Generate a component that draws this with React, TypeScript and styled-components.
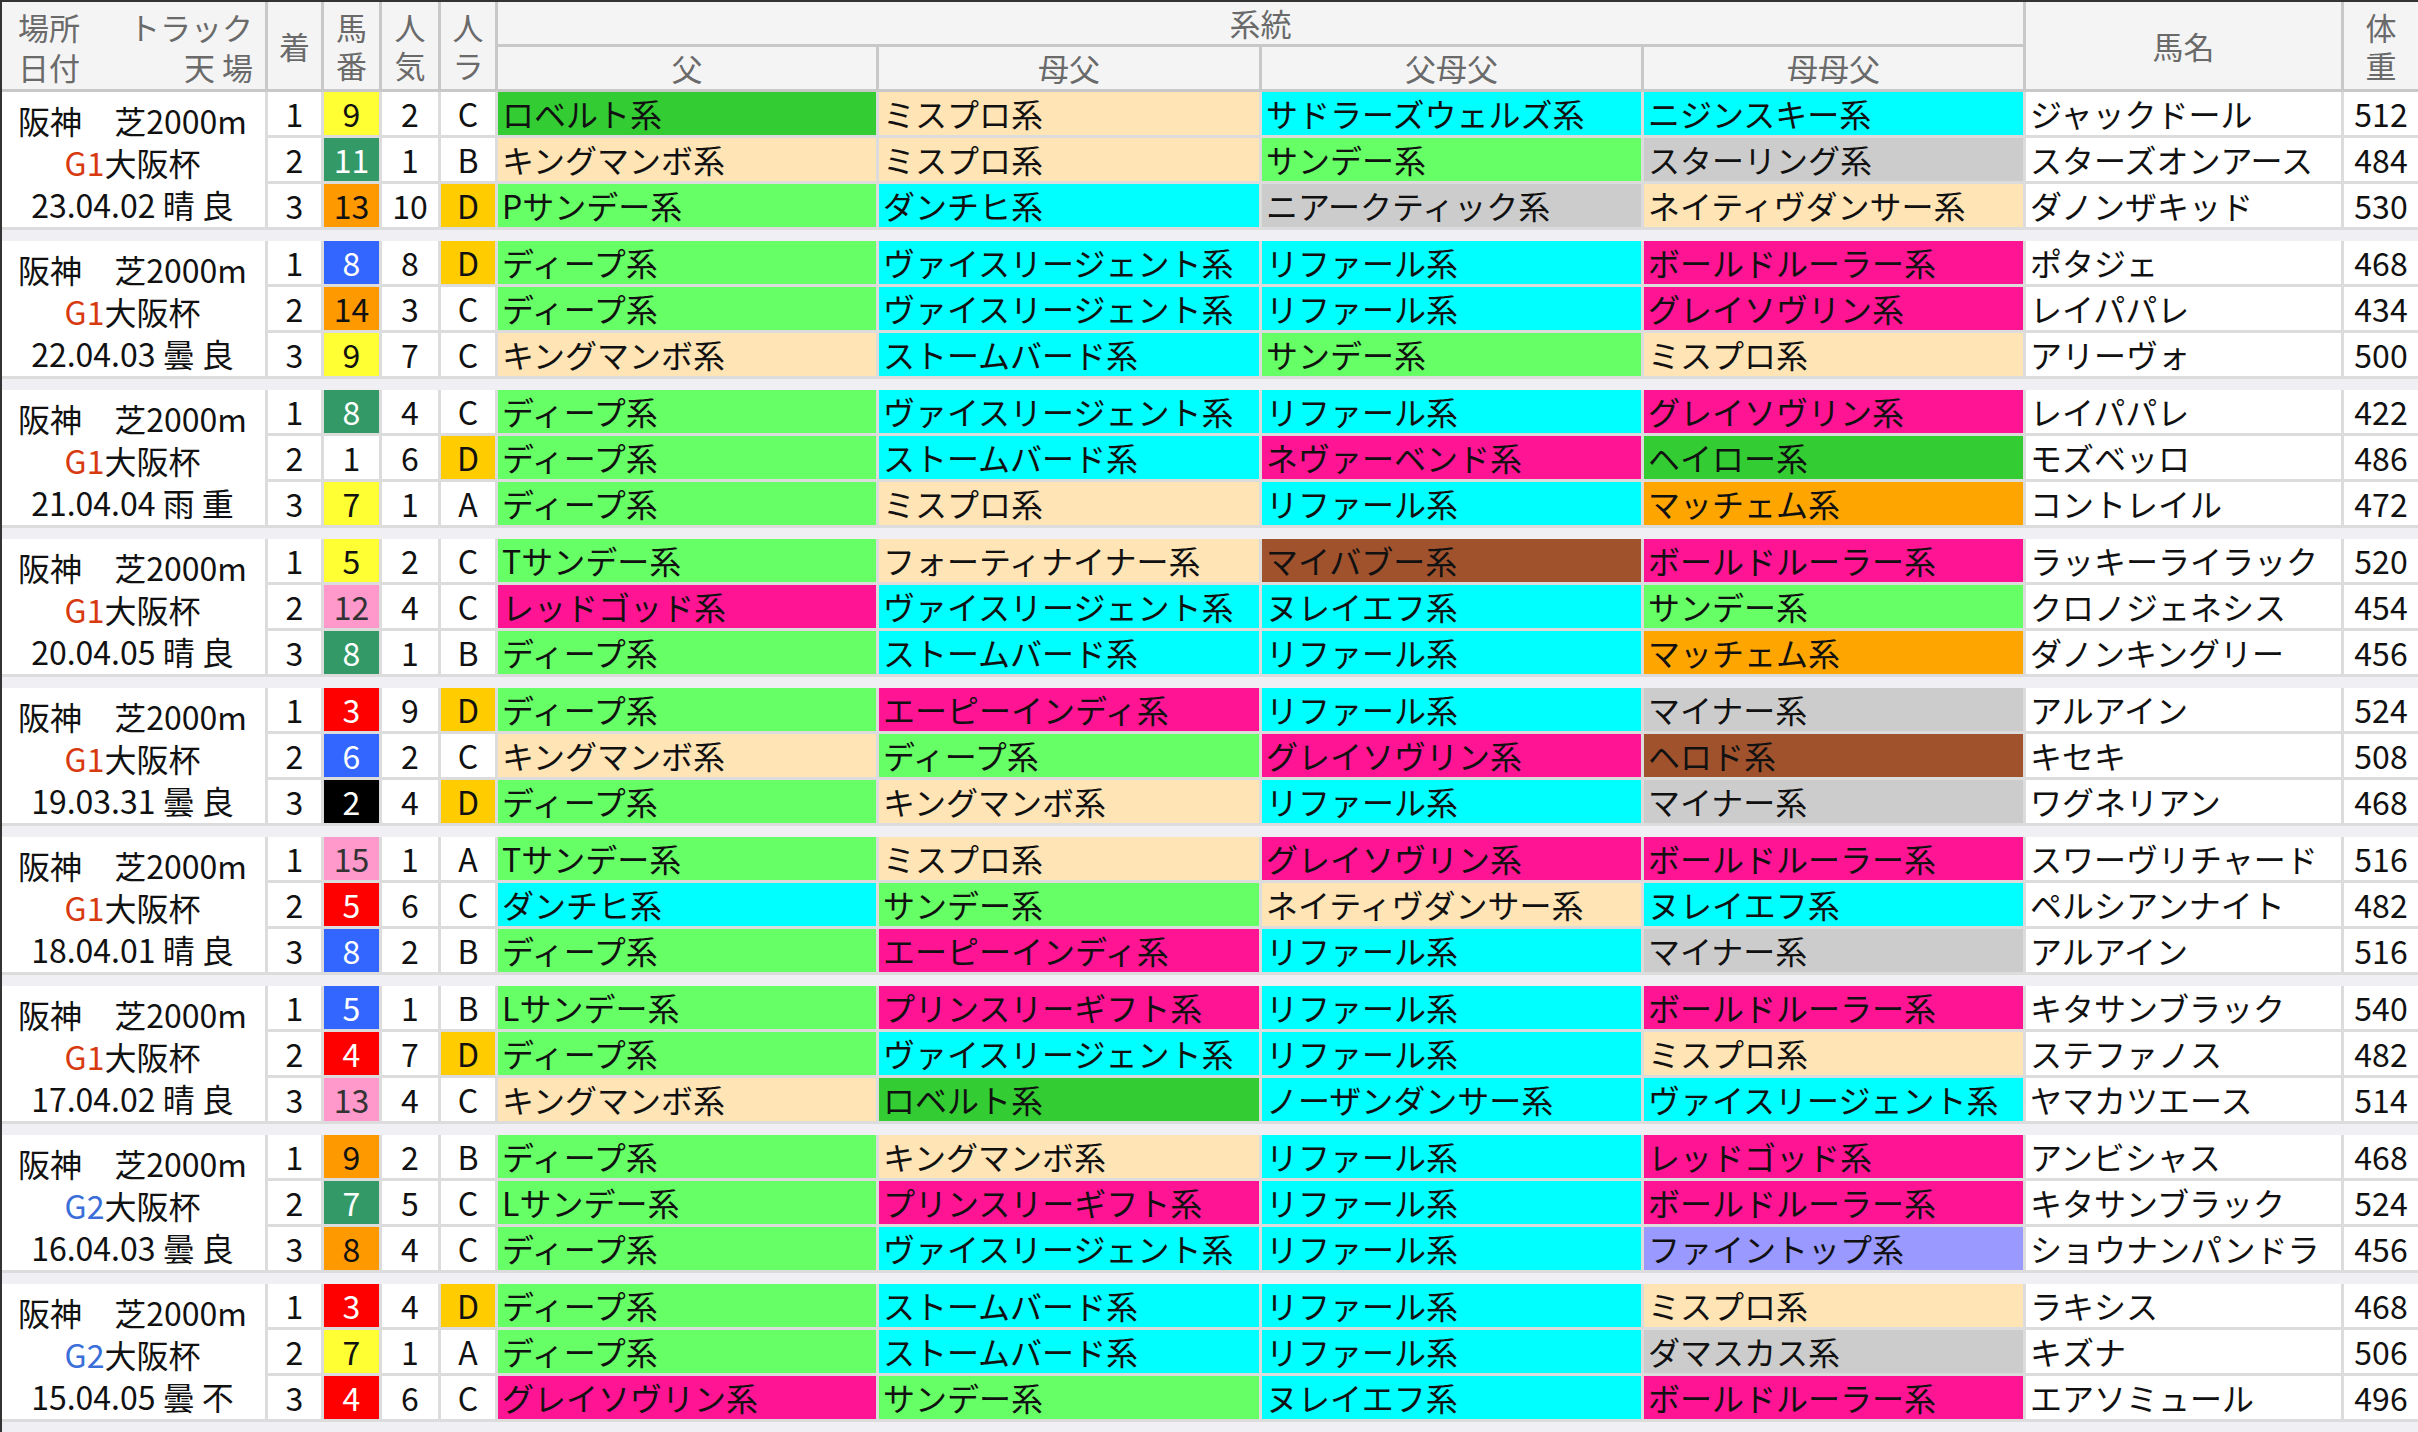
import React from "react";
import styled, { createGlobalStyle } from "styled-components";

const Global = createGlobalStyle`
  html, body { margin: 0; padding: 0; background: #fff; }
  body { font-family: "Noto Sans CJK JP", "Noto Sans", sans-serif; }
`;

const COLS = "263px 53px 55px 56px 54px 378px 380px 379px 379px 315px 74px";

const Page = styled.div`
  width: 2418px;
  height: 1432px;
  overflow: hidden;
  box-sizing: border-box;
  border-left: 2px solid #333;
  border-top: 2px solid #333;
  background: #f0f0f4;
`;

const Header = styled.div`
  display: grid;
  grid-template-columns: ${COLS};
  grid-template-rows: 42px 42px;
  gap: 3px;
  background: #c8c8c8;
  padding-bottom: 3px;
`;

const HCell = styled.div<{ $c: string; $r: string }>`
  grid-column: ${(p) => p.$c};
  grid-row: ${(p) => p.$r};
  background: #f4f4f4;
  color: #6a6a6a;
  font-size: 31px;
  line-height: 38px;
  display: flex;
  align-items: center;
  justify-content: center;
  text-align: center;
  overflow: hidden;
`;

const HLeft = styled.div`
  grid-column: 1;
  grid-row: 1 / 3;
  background: #f4f4f4;
  color: #6a6a6a;
  font-size: 31px;
  line-height: 40px;
  padding: 2px 12px 0 16px;
  display: flex;
  flex-direction: column;
  justify-content: center;
`;

const HLine = styled.div`
  display: flex;
  justify-content: space-between;
`;

const Block = styled.div`
  display: grid;
  grid-template-columns: ${COLS};
  grid-template-rows: 43px 43px 43px;
  gap: 3px;
  background: #dcdcdc;
  padding-bottom: 3px;
  margin-bottom: 11px;
`;

const Info = styled.div`
  grid-column: 1;
  grid-row: 1 / 4;
  background: #fff;
  font-size: 32px;
  line-height: 42px;
  color: #111;
  display: flex;
  flex-direction: column;
  justify-content: center;
  padding-left: 16px;
  padding-right: 18px;
  padding-top: 4px;
`;

const InfoLine = styled.div<{ $align?: string }>`
  display: flex;
  justify-content: ${(p) => p.$align || "space-between"};
  white-space: nowrap;
`;

const Grade = styled.span<{ $g: string }>`
  color: ${(p) => (p.$g === "G1" ? "#d83a10" : "#3a6ed8")};
`;

const Cell = styled.div<{ $bg?: string; $fg?: string; $left?: boolean }>`
  background: ${(p) => p.$bg || "#fff"};
  color: ${(p) => p.$fg || "#111"};
  font-size: 32px;
  line-height: 43px;
  white-space: nowrap;
  overflow: hidden;
  display: flex;
  align-items: center;
  justify-content: ${(p) => (p.$left ? "flex-start" : "center")};
  padding-left: ${(p) => (p.$left ? "4px" : "0")};
`;

const C: Record<string, string> = {
  dg: "#33cc33",
  pe: "#ffe4b5",
  gr: "#66ff66",
  cy: "#00ffff",
  ga: "#cccccc",
  mg: "#ff1493",
  or: "#ffa500",
  br: "#a0522d",
  lv: "#9999ff",
};

const F: Record<string, [string, string]> = {
  w: ["#ffffff", "#111"],
  k: ["#000000", "#fff"],
  r: ["#ff0000", "#fff"],
  b: ["#3366ff", "#fff"],
  y: ["#ffff33", "#111"],
  g: ["#339966", "#fff"],
  o: ["#ff9900", "#111"],
  p: ["#ff99cc", "#333"],
};

const S: Record<string, string> = {
  ディープ系: "gr", サンデー系: "gr", Pサンデー系: "gr", Tサンデー系: "gr", Lサンデー系: "gr",
  ロベルト系: "dg", ヘイロー系: "dg",
  キングマンボ系: "pe", ミスプロ系: "pe", ネイティヴダンサー系: "pe", フォーティナイナー系: "pe",
  ダンチヒ系: "cy", ヴァイスリージェント系: "cy", リファール系: "cy", ストームバード系: "cy", ヌレイエフ系: "cy",
  サドラーズウェルズ系: "cy", ニジンスキー系: "cy", ノーザンダンサー系: "cy",
  ニアークティック系: "ga", スターリング系: "ga", マイナー系: "ga", ダマスカス系: "ga",
  ボールドルーラー系: "mg", グレイソヴリン系: "mg", ネヴァーベンド系: "mg", レッドゴッド系: "mg",
  エーピーインディ系: "mg", プリンスリーギフト系: "mg",
  マッチェム系: "or", マイバブー系: "br", ヘロド系: "br", ファイントップ系: "lv",
};

type R = [string, string, string, string, string, string, string, string, string, string, string];
type B = { g: string; date: string; rows: R[] };

const data: B[] = [
  { g: "G1", date: "23.04.02 晴 良", rows: [
    ["1", "9", "y", "2", "C", "ロベルト系", "ミスプロ系", "サドラーズウェルズ系", "ニジンスキー系", "ジャックドール", "512"],
    ["2", "11", "g", "1", "B", "キングマンボ系", "ミスプロ系", "サンデー系", "スターリング系", "スターズオンアース", "484"],
    ["3", "13", "o", "10", "D", "Pサンデー系", "ダンチヒ系", "ニアークティック系", "ネイティヴダンサー系", "ダノンザキッド", "530"],
  ]},
  { g: "G1", date: "22.04.03 曇 良", rows: [
    ["1", "8", "b", "8", "D", "ディープ系", "ヴァイスリージェント系", "リファール系", "ボールドルーラー系", "ポタジェ", "468"],
    ["2", "14", "o", "3", "C", "ディープ系", "ヴァイスリージェント系", "リファール系", "グレイソヴリン系", "レイパパレ", "434"],
    ["3", "9", "y", "7", "C", "キングマンボ系", "ストームバード系", "サンデー系", "ミスプロ系", "アリーヴォ", "500"],
  ]},
  { g: "G1", date: "21.04.04 雨 重", rows: [
    ["1", "8", "g", "4", "C", "ディープ系", "ヴァイスリージェント系", "リファール系", "グレイソヴリン系", "レイパパレ", "422"],
    ["2", "1", "w", "6", "D", "ディープ系", "ストームバード系", "ネヴァーベンド系", "ヘイロー系", "モズベッロ", "486"],
    ["3", "7", "y", "1", "A", "ディープ系", "ミスプロ系", "リファール系", "マッチェム系", "コントレイル", "472"],
  ]},
  { g: "G1", date: "20.04.05 晴 良", rows: [
    ["1", "5", "y", "2", "C", "Tサンデー系", "フォーティナイナー系", "マイバブー系", "ボールドルーラー系", "ラッキーライラック", "520"],
    ["2", "12", "p", "4", "C", "レッドゴッド系", "ヴァイスリージェント系", "ヌレイエフ系", "サンデー系", "クロノジェネシス", "454"],
    ["3", "8", "g", "1", "B", "ディープ系", "ストームバード系", "リファール系", "マッチェム系", "ダノンキングリー", "456"],
  ]},
  { g: "G1", date: "19.03.31 曇 良", rows: [
    ["1", "3", "r", "9", "D", "ディープ系", "エーピーインディ系", "リファール系", "マイナー系", "アルアイン", "524"],
    ["2", "6", "b", "2", "C", "キングマンボ系", "ディープ系", "グレイソヴリン系", "ヘロド系", "キセキ", "508"],
    ["3", "2", "k", "4", "D", "ディープ系", "キングマンボ系", "リファール系", "マイナー系", "ワグネリアン", "468"],
  ]},
  { g: "G1", date: "18.04.01 晴 良", rows: [
    ["1", "15", "p", "1", "A", "Tサンデー系", "ミスプロ系", "グレイソヴリン系", "ボールドルーラー系", "スワーヴリチャード", "516"],
    ["2", "5", "r", "6", "C", "ダンチヒ系", "サンデー系", "ネイティヴダンサー系", "ヌレイエフ系", "ペルシアンナイト", "482"],
    ["3", "8", "b", "2", "B", "ディープ系", "エーピーインディ系", "リファール系", "マイナー系", "アルアイン", "516"],
  ]},
  { g: "G1", date: "17.04.02 晴 良", rows: [
    ["1", "5", "b", "1", "B", "Lサンデー系", "プリンスリーギフト系", "リファール系", "ボールドルーラー系", "キタサンブラック", "540"],
    ["2", "4", "r", "7", "D", "ディープ系", "ヴァイスリージェント系", "リファール系", "ミスプロ系", "ステファノス", "482"],
    ["3", "13", "p", "4", "C", "キングマンボ系", "ロベルト系", "ノーザンダンサー系", "ヴァイスリージェント系", "ヤマカツエース", "514"],
  ]},
  { g: "G2", date: "16.04.03 曇 良", rows: [
    ["1", "9", "o", "2", "B", "ディープ系", "キングマンボ系", "リファール系", "レッドゴッド系", "アンビシャス", "468"],
    ["2", "7", "g", "5", "C", "Lサンデー系", "プリンスリーギフト系", "リファール系", "ボールドルーラー系", "キタサンブラック", "524"],
    ["3", "8", "o", "4", "C", "ディープ系", "ヴァイスリージェント系", "リファール系", "ファイントップ系", "ショウナンパンドラ", "456"],
  ]},
  { g: "G2", date: "15.04.05 曇 不", rows: [
    ["1", "3", "r", "4", "D", "ディープ系", "ストームバード系", "リファール系", "ミスプロ系", "ラキシス", "468"],
    ["2", "7", "y", "1", "A", "ディープ系", "ストームバード系", "リファール系", "ダマスカス系", "キズナ", "506"],
    ["3", "4", "r", "6", "C", "グレイソヴリン系", "サンデー系", "ヌレイエフ系", "ボールドルーラー系", "エアソミュール", "496"],
  ]},
];

const Two = ({ a, b }: { a: string; b: string }) => (
  <span>{a}<br />{b}</span>
);

export default function App() {
  return (
    <Page>
      <Global />
      <Header>
        <HLeft>
          <HLine><span>場所</span><span>トラック</span></HLine>
          <HLine><span>日付</span><span>天 場</span></HLine>
        </HLeft>
        <HCell $c="2" $r="1 / 3">着</HCell>
        <HCell $c="3" $r="1 / 3"><Two a="馬" b="番" /></HCell>
        <HCell $c="4" $r="1 / 3"><Two a="人" b="気" /></HCell>
        <HCell $c="5" $r="1 / 3"><Two a="人" b="ラ" /></HCell>
        <HCell $c="6 / 10" $r="1">系統</HCell>
        <HCell $c="6" $r="2">父</HCell>
        <HCell $c="7" $r="2">母父</HCell>
        <HCell $c="8" $r="2">父母父</HCell>
        <HCell $c="9" $r="2">母母父</HCell>
        <HCell $c="10" $r="1 / 3">馬名</HCell>
        <HCell $c="11" $r="1 / 3"><Two a="体" b="重" /></HCell>
      </Header>
      {data.map((b, i) => (
        <Block key={i}>
          <Info>
            <InfoLine><span>阪神</span><span>芝2000m</span></InfoLine>
            <InfoLine $align="center"><span><Grade $g={b.g}>{b.g}</Grade>大阪杯</span></InfoLine>
            <InfoLine $align="center"><span>{b.date}</span></InfoLine>
          </Info>
          {b.rows.map((r, j) => (
            <React.Fragment key={j}>
              <Cell>{r[0]}</Cell>
              <Cell $bg={F[r[2]][0]} $fg={F[r[2]][1]}>{r[1]}</Cell>
              <Cell>{r[3]}</Cell>
              <Cell $bg={r[4] === "D" ? "#ffcc00" : "#fff"}>{r[4]}</Cell>
              {[r[5], r[6], r[7], r[8]].map((s, k) => (
                <Cell key={k} $left $bg={C[S[s]]}>{s}</Cell>
              ))}
              <Cell $left>{r[9]}</Cell>
              <Cell>{r[10]}</Cell>
            </React.Fragment>
          ))}
        </Block>
      ))}
    </Page>
  );
}
